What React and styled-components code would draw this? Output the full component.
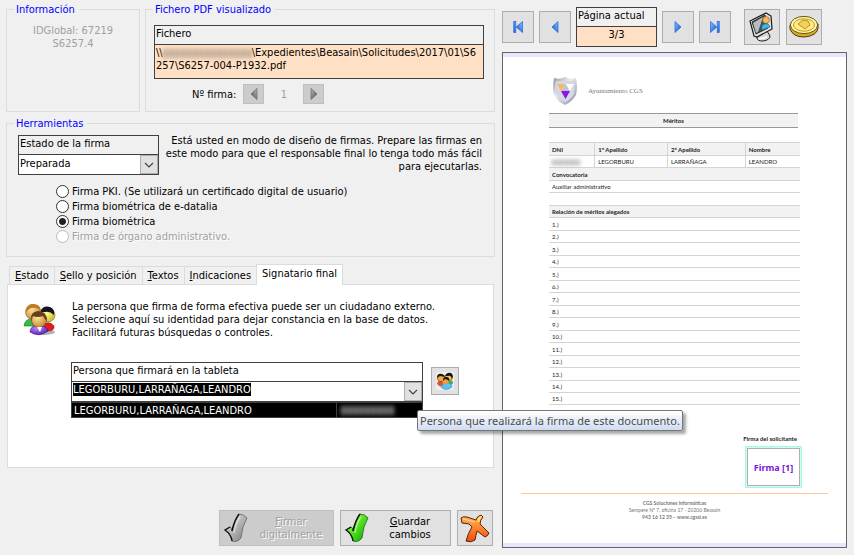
import React, { useEffect, useRef, useState } from 'react';
import styled, { createGlobalStyle } from 'styled-components';

const METHODS = [
  { id: 'pki', label: 'Firma PKI. (Se utilizará un certificado digital de usuario)' },
  { id: 'edatalia', label: 'Firma biométrica de e-datalia' },
  { id: 'bio', label: 'Firma biométrica' },
  { id: 'organo', label: 'Firma de órgano administrativo.', disabled: true },
];

const TABS = ['Estado', 'Sello y posición', 'Textos', 'Indicaciones', 'Signatario final'];

const MERITS = Array.from({ length: 15 }, (_, i) => i + 1);

const Arrow = ({ back, bar, gray }) => (
  <svg width="14" height="14" viewBox="0 0 14 14" aria-hidden="true">
    <defs>
      <linearGradient id={gray ? 'arrowGray' : 'arrowBlue'} x1="0" y1="0" x2="1" y2="1">
        <stop offset="0" stopColor={gray ? '#bbb' : '#8cc4ff'} />
        <stop offset="1" stopColor={gray ? '#4a4a4a' : '#0a4fd0'} />
      </linearGradient>
    </defs>
    <g
      transform={back ? 'translate(14 0) scale(-1 1)' : undefined}
      fill={gray ? 'url(#arrowGray)' : 'url(#arrowBlue)'}
      stroke={gray ? '#666' : '#1b5fd6'}
      strokeWidth="0.7"
    >
      <path d={bar ? 'M2.5 1.5 L8.8 7 L2.5 12.5 Z' : 'M4 1.5 L10 7 L4 12.5 Z'} />
      {bar && <rect x="9.2" y="1.5" width="2" height="11" />}
    </g>
  </svg>
);

const Check = ({ gray }) => (
  <svg width="26" height="30" viewBox="0 0 26 30" aria-hidden="true">
    <defs>
      <linearGradient id={gray ? 'checkGray' : 'checkGreen'} x1="0" y1="0" x2="1" y2="1">
        <stop offset="0" stopColor={gray ? '#eee' : '#c8ff6a'} />
        <stop offset="0.5" stopColor={gray ? '#b4b4b4' : '#4fe01c'} />
        <stop offset="1" stopColor={gray ? '#777' : '#0a9a08'} />
      </linearGradient>
    </defs>
    <path
      d="M2 17 L7 14 Q9 14 9 18 Q11 8 16 1 Q21 1 24 5 Q19 13 18 25 Q14 30 9 28 Q8 21 2 17 Z"
      fill={gray ? 'url(#checkGray)' : 'url(#checkGreen)'}
      stroke={gray ? '#666' : '#176b0c'}
      strokeWidth="0.8"
    />
    <path d="M9 28 Q8 21 2 17 L7 14 M9 18 Q11 8 16 1" fill="none" stroke="#111" strokeWidth="1.4" />
    <path d="M11 20 Q13 9 17 4" fill="none" stroke="#fff" strokeWidth="1.2" opacity="0.6" />
  </svg>
);

const Cross = () => (
  <svg width="32" height="32" viewBox="0 0 32 32" aria-hidden="true">
    <defs>
      <linearGradient id="cross" x1="0" y1="0" x2="0" y2="1">
        <stop offset="0" stopColor="#ffb45a" />
        <stop offset="0.5" stopColor="#ff8430" />
        <stop offset="1" stopColor="#ee4a08" />
      </linearGradient>
    </defs>
    <path
      d="M2 6 Q4 4 8 5 L17 8 Q18 4 22 3 L24 5 Q21 8 21 12 L30 21 Q29 24 26 25 L18 19 Q17 23 16 28 Q12 31 7 29 Q9 21 13 15 L10 12 L3 11 Z"
      fill="url(#cross)"
      stroke="#5b2407"
      strokeWidth="1"
    />
    <path d="M18 8 Q19 5 22 4 L23 5 Q20 8 20 11 Z" fill="#ffe066" />
    <path d="M4 7 L16 10" stroke="#ffd9a0" strokeWidth="1" />
  </svg>
);

const People = ({ size }) => (
  <svg width={size} height={size} viewBox="0 0 33 33" aria-hidden="true">
    <defs>
      <radialGradient id="faceTan" cx="0.4" cy="0.35" r="0.7">
        <stop offset="0" stopColor="#ffe2a8" />
        <stop offset="1" stopColor="#c48425" />
      </radialGradient>
      <radialGradient id="faceYellow" cx="0.4" cy="0.4" r="0.7">
        <stop offset="0" stopColor="#ffff9c" />
        <stop offset="1" stopColor="#c9ae18" />
      </radialGradient>
      <radialGradient id="shirt" cx="0.4" cy="0.3" r="0.8">
        <stop offset="0" stopColor="#c08cff" />
        <stop offset="1" stopColor="#4b16a8" />
      </radialGradient>
    </defs>
    <ellipse cx="21" cy="29" rx="11" ry="3" fill="#000" opacity="0.3" />
    <path d="M1 23 Q2 15 10 16 L15 23 Z" fill="#35b84c" stroke="#15762a" strokeWidth="0.6" />
    <path d="M20 22 Q26 17 31 23 Q32 28 24 28 Z" fill="#e21b20" stroke="#8b0d0d" strokeWidth="0.6" />
    <circle cx="25" cy="12" r="7" fill="url(#faceYellow)" stroke="#6b5a14" strokeWidth="0.5" />
    <path d="M17 9 Q20 2 27 4 Q32 6 31 12 Q27 8 22 9 Z" fill="#15161c" />
    <circle cx="10" cy="9" r="7.5" fill="url(#faceTan)" stroke="#6d4510" strokeWidth="0.5" />
    <path d="M3 9 Q3 1 10 1 Q17 1 18 7 Q11 3 6 6 Z" fill="#bd7d24" />
    <path d="M7 29 Q7 23 15 22 Q24 23 25 28 Q16 35 7 29 Z" fill="url(#shirt)" stroke="#32107c" strokeWidth="0.6" />
    <circle cx="16" cy="17" r="7.5" fill="url(#faceTan)" stroke="#5c3810" strokeWidth="0.5" />
    <path d="M8 17 Q7 9 15 8 Q24 8 24 18 Q22 17 20 13 Q14 15 10 13 Z" fill="#67401b" />
    <path d="M14 24 L17 29 L19 24 Z" fill="#fff" />
  </svg>
);

const Group = () => (
  <svg width="18" height="18" viewBox="0 0 18 18" aria-hidden="true">
    <rect width="18" height="18" fill="#eee" />
    <path d="M1 12 Q2 8 6 9 L9 14 Q4 16 1 12 Z" fill="#e2552b" />
    <path d="M10 11 Q15 6 17 10 Q17 13 12 14 Z" fill="#37b54a" />
    <circle cx="5" cy="6" r="3.6" fill="#f4a944" stroke="#442206" strokeWidth="0.5" />
    <path d="M1 6 Q1 1 6 2 Q9 3 9 5 L4 4 Z" fill="#20160c" />
    <circle cx="13" cy="5" r="3.6" fill="#f7bd58" stroke="#442206" strokeWidth="0.5" />
    <path d="M9 4 Q11 0 15 1 Q18 3 16 7 Q15 3 12 4 Z" fill="#141414" />
    <path d="M5 15 Q6 11 11 11 Q16 11 16 15 Q10 20 5 15 Z" fill="#5dc3ee" stroke="#2c7eb0" strokeWidth="0.5" />
    <circle cx="10" cy="9" r="3" fill="#f59a38" />
    <path d="M7 9 Q7 5 10 5 Q14 5 13 9 Q11 7 9 7 Z" fill="#17110b" />
  </svg>
);

const Monitor = () => (
  <svg width="28" height="30" viewBox="0 0 28 30" aria-hidden="true">
    <path d="M9 24 L13 21 L19 19 L22 24 Q22 28 15 29 Q9 29 9 26 Z" fill="#d8d8d8" stroke="#222" strokeWidth="1" />
    <path d="M2 9 L18 1 L23 4 L24 17 L9 25 L6 24 Z" fill="#e4e4e4" stroke="#1b1b1b" strokeWidth="1.2" />
    <path d="M4 10 L17 3 L20 16 L8 22 Z" fill="#4b4f52" stroke="#111" strokeWidth="0.8" />
    <path d="M5 11 L15 5 L10 20 L8 21 Z" fill="#b9bcbe" />
    <circle cx="18" cy="8" r="3.4" fill="#f3ba55" stroke="#8c571a" strokeWidth="0.6" />
    <path d="M14 18 Q13 12 17 12 Q21 11 22 15 Z" fill="#3cb8ea" stroke="#14648f" strokeWidth="0.6" />
    <path d="M11 27 L19 25" stroke="#fff" strokeWidth="1.4" />
  </svg>
);

const Coin = () => (
  <svg width="30" height="24" viewBox="0 0 30 24" aria-hidden="true">
    <path d="M1 10 V14 Q4 22 15 22 Q28 21 29 13 V9 Z" fill="#d9ab25" stroke="#4a3905" strokeWidth="1" />
    <ellipse cx="15" cy="10" rx="13.600" ry="8.600" fill="#fff6b4" stroke="#6a530c" strokeWidth="1" />
    <ellipse cx="15" cy="10" rx="10.500" ry="6.200" fill="#ffec86" stroke="#c59a14" strokeWidth="1" />
    <path d="M9 9 L14 5 L19 6 L21 10 L16 14 Z" fill="#f4d25a" stroke="#a67b0d" strokeWidth="0.8" />
  </svg>
);

const Shield = () => (
  <svg width="26" height="30" viewBox="0 0 26 30" aria-hidden="true">
    <defs>
      <linearGradient id="shield" x1="0" y1="0" x2="1" y2="1">
        <stop offset="0" stopColor="#8d929b" />
        <stop offset="0.4" stopColor="#eceef1" />
        <stop offset="1" stopColor="#8087a0" />
      </linearGradient>
    </defs>
    <path d="M13 1 Q18 4 24 2 Q26 12 24 19 Q20 26 13 29 Q6 26 2 19 Q0 12 2 2 Q8 4 13 1 Z" fill="url(#shield)" />
    <path d="M13 4 Q18 6 22 5 Q23 12 22 18 Q18 24 13 26 Q8 24 4 18 Q3 12 4 5 Q8 6 13 4 Z" fill="#d5d8de" />
    <path d="M5 8 H13 L9 15 Z" fill="#f8b76a" />
    <path d="M14 8 H22 L18 15 Z" fill="#fff" />
    <path d="M13.500 8 L17.500 15 H9.500 Z" fill="#c3c4cb" />
    <path d="M9 15 H18 L13.500 23 Z" fill="#8a14ef" />
  </svg>
);

const Chevron = () => (
  <svg width="10" height="6" viewBox="0 0 10 6" aria-hidden="true">
    <path d="M1 1 L5 5 L9 1" fill="none" stroke="#444" strokeWidth="1.2" />
  </svg>
);

const App = () => {
  const [method, setMethod] = useState('bio');
  const [tab, setTab] = useState('Signatario final');
  const person = useRef(null);

  useEffect(() => {
    person.current.focus();
    person.current.select();
  }, []);

  return (
    <Page>
      <GlobalStyle />
      <Left>
        <TopGroups>
          <Fieldset>
            <Legend>Información</Legend>
            <Info>
              IDGlobal: 67219
              <br />
              S6257.4
            </Info>
          </Fieldset>
          <Fieldset>
            <Legend>Fichero PDF visualizado</Legend>
            <FileArea>
              <Box>
                <BoxTitle>Fichero</BoxTitle>
                <FilePath>
                  \\<Redacted $width={89} $color="#bfa995" />
                  \Expedientes\Beasain\Solicitudes\2017\01\S6
                  <br />
                  257\S6257-004-P1932.pdf
                </FilePath>
              </Box>
              <SignatureNav>
                <span>Nº firma:</span>
                <SmallButton disabled aria-label="Firma anterior">
                  <Arrow back gray />
                </SmallButton>
                <Count>1</Count>
                <SmallButton disabled aria-label="Firma siguiente">
                  <Arrow gray />
                </SmallButton>
              </SignatureNav>
            </FileArea>
          </Fieldset>
        </TopGroups>

        <Tools>
          <Legend>Herramientas</Legend>
          <ToolsTop>
            <StateBox>
              <BoxTitle as="label" htmlFor="estado">Estado de la firma</BoxTitle>
              <SelectWrap>
                <Select id="estado" defaultValue="Preparada">
                  <option>Preparada</option>
                </Select>
                <DropMark><Chevron /></DropMark>
              </SelectWrap>
            </StateBox>
            <Notice>
              Está usted en modo de diseño de firmas. Prepare las firmas en
              <br />
              este modo para que el responsable final lo tenga todo más fácil
              <br />
              para ejecutarlas.
            </Notice>
          </ToolsTop>
          <Methods>
            {METHODS.map((m) => (
              <Method key={m.id} $disabled={m.disabled}>
                <Radio
                  type="radio"
                  name="method"
                  checked={method === m.id}
                  disabled={m.disabled}
                  onChange={() => setMethod(m.id)}
                />
                {m.label}
              </Method>
            ))}
          </Methods>
        </Tools>

        <Tabs role="tablist">
          {TABS.map((name) => (
            <Tab
              key={name}
              role="tab"
              aria-selected={tab === name}
              $active={tab === name}
              onClick={() => setTab(name)}
            >
              {tab === name ? name : <><u>{name[0]}</u>{name.slice(1)}</>}
            </Tab>
          ))}
        </Tabs>
        <Panel role="tabpanel">
          <Intro>
            <People size={33} />
            <p>
              La persona que firma de forma efectiva puede ser un ciudadano externo.
              <br />
              Seleccione aquí su identidad para dejar constancia en la base de datos.
              <br />
              Facilitará futuras búsquedas o controles.
            </p>
          </Intro>
          <Signer>
            <Combo>
              <ComboBox>
                <BoxTitle as="label" htmlFor="persona">Persona que firmará en la tableta</BoxTitle>
                <SelectWrap>
                  <ComboInput
                    id="persona"
                    ref={person}
                    autoComplete="off"
                    spellCheck={false}
                    defaultValue="LEGORBURU,LARRAÑAGA,LEANDRO"
                  />
                  <DropMark><Chevron /></DropMark>
                </SelectWrap>
              </ComboBox>
              <Options>
                <span>LEGORBURU,LARRAÑAGA,LEANDRO</span>
                <OptionId><Redacted $width={54} $color="#777" /></OptionId>
              </Options>
              <Tooltip role="tooltip">Persona que realizará la firma de este documento.</Tooltip>
            </Combo>
            <PeopleButton aria-label="Personas"><Group /></PeopleButton>
          </Signer>
        </Panel>

        <Actions>
          <ActionButton disabled $width={115}>
            <Check gray />
            <span><u>F</u>irmar<br />digitalmente</span>
          </ActionButton>
          <ActionButton $width={111}>
            <Check />
            <span><u>G</u>uardar<br />cambios</span>
          </ActionButton>
          <SquareButton aria-label="Cancelar"><Cross /></SquareButton>
        </Actions>
      </Left>

      <Right>
        <Toolbar>
          <PageButton aria-label="Primera página"><Arrow back bar /></PageButton>
          <PageButton aria-label="Página anterior"><Arrow back /></PageButton>
          <PageBox>
            <BoxTitle>Página actual</BoxTitle>
            <PageNumber>3/3</PageNumber>
          </PageBox>
          <PageButton aria-label="Página siguiente"><Arrow /></PageButton>
          <PageButton aria-label="Última página"><Arrow bar /></PageButton>
          <Extras>
            <SquareButton aria-label="Ver en pantalla"><Monitor /></SquareButton>
            <SquareButton aria-label="Sello"><Coin /></SquareButton>
          </Extras>
        </Toolbar>

        <Paper>
          <PaperBody>
            <Brand>
              <Shield />
              Ayuntamiento CGS
            </Brand>
            <DocTitle>Méritos</DocTitle>
            <DocTable>
              <colgroup>
                <col width="18%" />
                <col width="29%" />
                <col width="31%" />
                <col width="22%" />
              </colgroup>
              <tbody>
                <Row $shade>
                  <th>DNI</th>
                  <th>1º Apellido</th>
                  <th>2º Apellido</th>
                  <th>Nombre</th>
                </Row>
                <Row>
                  <td><Redacted $width={28} $color="#aaa" $small /></td>
                  <td>LEGORBURU</td>
                  <td>LARRAÑAGA</td>
                  <td>LEANDRO</td>
                </Row>
                <Row $shade><th colSpan="4">Convocatoria</th></Row>
                <Row><td colSpan="4">Auxiliar administrativo</td></Row>
                <Row><td colSpan="4" /></Row>
                <Row $shade><th colSpan="4">Relación de méritos alegados</th></Row>
                {MERITS.map((n) => (
                  <Row key={n}><td colSpan="4">{n}.)</td></Row>
                ))}
              </tbody>
            </DocTable>
          </PaperBody>
          <Signature>
            <strong>Firma del solicitante</strong>
            <Stamp>Firma [1]</Stamp>
          </Signature>
          <DocFooter>
            <strong>CGS Soluciones informáticas</strong>
            <span>Sempere Nº 7, oficina 17 - 20200 Beasain</span>
            <strong>943 16 12 35 – www.cgssl.es</strong>
          </DocFooter>
        </Paper>
      </Right>
    </Page>
  );
};

export default App;

const GlobalStyle = createGlobalStyle`
  * {
    box-sizing: border-box;
  }
  body {
    margin: 0;
    background: #f0f0f0;
    color: #000;
    font-family: 'DejaVu Sans Condensed', 'Noto Sans', sans-serif;
    font-size: 11px;
    line-height: 13px;
  }
  button, input, select {
    font: inherit;
    color: inherit;
  }
  p {
    margin: 0;
  }
  svg {
    display: block;
    flex: none;
  }
`;

const Page = styled.div`
  display: grid;
  grid-template-columns: minmax(0, 489fr) minmax(0, 345fr);
  gap: 7px;
  min-height: 100vh;
  padding: 3px 7px 7px 6px;
`;

const Left = styled.div`
  display: flex;
  flex-direction: column;
`;

const TopGroups = styled.div`
  display: grid;
  grid-template-columns: 134fr 350fr;
  gap: 5px;
`;

const Fieldset = styled.fieldset`
  min-width: 0;
  margin: 0;
  padding: 0 0 7px;
  border: 1px solid #dcdcdc;
`;

const Legend = styled.legend`
  margin-left: 7px;
  padding: 0 4px 0 2px;
  color: #0000ff;
`;

const Info = styled.div`
  padding-top: 8px;
  color: #a0a0a0;
  text-align: center;
`;

const FileArea = styled.div`
  padding: 9px 10px 0 8px;
`;

const Box = styled.div`
  border: 1px solid #404040;
`;

const BoxTitle = styled.div`
  display: block;
  height: 19px;
  padding: 1px;
  border-bottom: 1px solid #404040;
`;

const FilePath = styled.div`
  height: 33px;
  padding: 1px;
  background: #ffe0c4;
  white-space: nowrap;
`;

const Redacted = styled.span`
  display: inline-block;
  width: ${({ $width }) => $width}px;
  height: ${({ $small }) => ($small ? 5 : 9)}px;
  background: repeating-linear-gradient(
    90deg,
    ${({ $color }) => $color} 0 5px,
    transparent 5px 6px
  );
  filter: blur(2px);
  vertical-align: middle;
`;

const SignatureNav = styled.div`
  display: flex;
  align-items: center;
  padding: 5px 0 0 38px;

  span {
    margin-right: 7px;
  }
`;

const Count = styled.output`
  width: 39px;
  color: #a0a0a0;
  text-align: center;
`;

const Button = styled.button`
  display: flex;
  flex: none;
  align-items: center;
  justify-content: center;
  padding: 0;
  border: 1px solid #adadad;
  background: #e1e1e1;

  &:disabled {
    border-color: #bfbfbf;
    background: #cccccc;
  }
`;

const SmallButton = styled(Button)`
  width: 21px;
  height: 20px;
`;

const PageButton = styled(Button)`
  width: 32px;
  height: 32px;
`;

const SquareButton = styled(Button)`
  width: 36px;
  height: 36px;
`;

const PeopleButton = styled(Button)`
  width: 28px;
  height: 28px;
  margin-top: 5px;
`;

const Tools = styled(Fieldset)`
  margin-top: 5px;
  padding-bottom: 12px;
`;

const ToolsTop = styled.div`
  display: flex;
  align-items: flex-start;
  justify-content: space-between;
  padding: 4px 12px 0 11px;
`;

const StateBox = styled(Box)`
  width: 141px;
  margin-top: 1px;
`;

const SelectWrap = styled.div`
  display: flex;
  height: 19px;
  background: #fff;
`;

const Select = styled.select`
  flex: 1;
  min-width: 0;
  margin-right: -18px;
  padding: 0 18px 3px 1px;
  border: 0;
  outline: 0;
  appearance: none;
  background: transparent;
`;

const DropMark = styled.span`
  display: flex;
  width: 18px;
  align-items: center;
  justify-content: center;
  border: 1px solid #adadad;
  background: #e1e1e1;
  pointer-events: none;
`;

const Notice = styled.p`
  text-align: right;
  white-space: nowrap;
`;

const Methods = styled.div`
  display: flex;
  flex-direction: column;
  padding: 9px 0 0 49px;
`;

const Method = styled.label`
  display: flex;
  align-items: center;
  gap: 3px;
  height: 15px;
  color: ${({ $disabled }) => ($disabled ? '#a0a0a0' : '#000')};
  text-shadow: ${({ $disabled }) => ($disabled ? '1px 1px #fff' : 'none')};
`;

const Radio = styled.input`
  width: 13px;
  height: 13px;
  margin: 0;
  border: 1px solid #333;
  border-radius: 50%;
  appearance: none;
  background: #fff;

  &:checked {
    background: radial-gradient(circle, #222 0 3px, #fff 4px);
  }
  &:disabled {
    border-color: #bbb;
  }
`;

const Tabs = styled.div`
  display: flex;
  align-items: flex-end;
  margin: 7px 1px 0 3px;
`;

const Tab = styled.button`
  height: ${({ $active }) => ($active ? 21 : 18)}px;
  margin-bottom: ${({ $active }) => ($active ? -1 : 0)}px;
  padding: ${({ $active }) => ($active ? '0 5px 3px' : '0 5px')};
  border: 1px solid #dcdcdc;
  border-right-width: ${({ $active }) => ($active ? 1 : 0)}px;
  border-bottom: 0;
  background: ${({ $active }) => ($active ? '#fff' : '#f0f0f0')};
  white-space: nowrap;
  z-index: 1;
`;

const Panel = styled.div`
  min-height: 184px;
  margin: 0 1px;
  padding: 15px;
  border: 1px solid #dcdcdc;
  background: #fff;
`;

const Intro = styled.div`
  display: flex;
  align-items: center;
  gap: 16px;
`;

const Signer = styled.div`
  display: flex;
  align-items: flex-start;
  gap: 8px;
  margin: 23px 19px 0 48px;
`;

const Combo = styled.div`
  position: relative;
  flex: 1;
`;

const ComboBox = styled(Box)`
  background: #fff;
`;

const ComboInput = styled.input`
  flex: 1;
  min-width: 0;
  padding: 0 1px 4px;
  border: 0;
  outline: 0;
  background: transparent;

  &::selection {
    background: #000;
    color: #fff;
  }
`;

const Options = styled.div`
  display: grid;
  grid-template-columns: 265fr 87fr;
  align-items: center;
  height: 16px;
  padding-left: 2px;
  border: 1px solid #404040;
  background: #000;
  color: #fff;
`;

const OptionId = styled.span`
  display: flex;
  align-items: center;
  height: 14px;
  padding-left: 4px;
  border-left: 1px solid #404040;
`;

const Tooltip = styled.div`
  position: absolute;
  top: 48px;
  left: 346px;
  z-index: 2;
  padding: 2px;
  border: 1px solid #767676;
  border-radius: 2px;
  background: linear-gradient(#fff, #cfdcf1);
  box-shadow: 3px 3px 3px rgba(0, 0, 0, 0.35);
  color: #4c4c4c;
  font-family: 'Noto Sans', sans-serif;
  line-height: 15px;
  white-space: nowrap;
`;

const Actions = styled.div`
  display: flex;
  justify-content: flex-end;
  gap: 6px;
  margin: 42px 2px 0 0;
`;

const ActionButton = styled(Button)`
  width: ${({ $width }) => $width}px;
  height: 36px;
  padding-left: 3px;

  span {
    flex: 1;
    text-align: center;
  }
  &:disabled {
    color: #a0a0a0;
    text-shadow: 1px 1px #fff;
  }
`;

const Right = styled.div`
  display: flex;
  flex-direction: column;
  gap: 5px;
  padding-top: 4px;
`;

const Toolbar = styled.div`
  display: flex;
  align-items: center;
  gap: 5px;
`;

const PageBox = styled(Box)`
  width: 81px;
`;

const PageNumber = styled.div`
  height: 19px;
  padding-top: 1px;
  background: #ffe0c4;
  text-align: center;
`;

const Extras = styled.div`
  display: flex;
  gap: 6px;
  margin-left: 8px;
`;

const Paper = styled.article`
  flex: 1;
  border: 1px solid #646464;
  background: #fff;
  box-shadow: inset 0 4px #e6e6ff, inset 0 -4px #e6e6ff;
  color: #222;
  font-family: Lato, sans-serif;
  font-size: 6px;
  line-height: 7px;
`;

const PaperBody = styled.div`
  padding: 23px 46px 0;
`;

const Brand = styled.header`
  display: flex;
  align-items: center;
  gap: 10px;
  padding-left: 3px;
  color: #777;
  font-family: 'Liberation Serif', serif;
  font-size: 7px;
`;

const DocTitle = styled.h1`
  margin: 7px 2px 14px 0;
  padding: 3px 0;
  border: solid #999;
  border-width: 1px 0;
  background: #f2f2f2;
  font-size: 6px;
  line-height: 7px;
  text-align: center;
`;

const DocTable = styled.table`
  width: 100%;
  border-spacing: 0;
  table-layout: fixed;
`;

const Row = styled.tr`
  height: 13px;
  background: ${({ $shade }) => ($shade ? '#f2f2f2' : '#fff')};

  &:nth-child(even) {
    height: 12px;
  }
  th, td {
    padding: 0 3px;
    border-top: 1px solid #d4d4d4;
    text-align: left;
    line-height: 7px;
  }
  th + th, td + td {
    border-left: 1px solid #d4d4d4;
  }
  &:last-child td {
    border-bottom: 1px solid #d4d4d4;
  }
`;

const Signature = styled.div`
  display: flex;
  flex-direction: column;
  align-items: flex-end;
  gap: 4px;
  padding: 30px 44px 0;

  strong {
    margin-right: 5px;
  }
`;

const Stamp = styled.div`
  display: flex;
  width: 57px;
  height: 42px;
  align-items: center;
  justify-content: center;
  border: 1px solid #a9f7e2;
  box-shadow: inset 0 0 0 1px #c9fff0, inset 0 0 0 2px #b9a9b1;
  color: #7c12d8;
  font-family: 'Noto Sans', sans-serif;
  font-size: 9px;
  font-weight: bold;
`;

const DocFooter = styled.footer`
  display: flex;
  flex-direction: column;
  margin: 5px 18px 0;
  padding-top: 6px;
  border-top: 1px solid #ffc899;
  color: #777;
  font-size: 5px;
  text-align: center;
`;
